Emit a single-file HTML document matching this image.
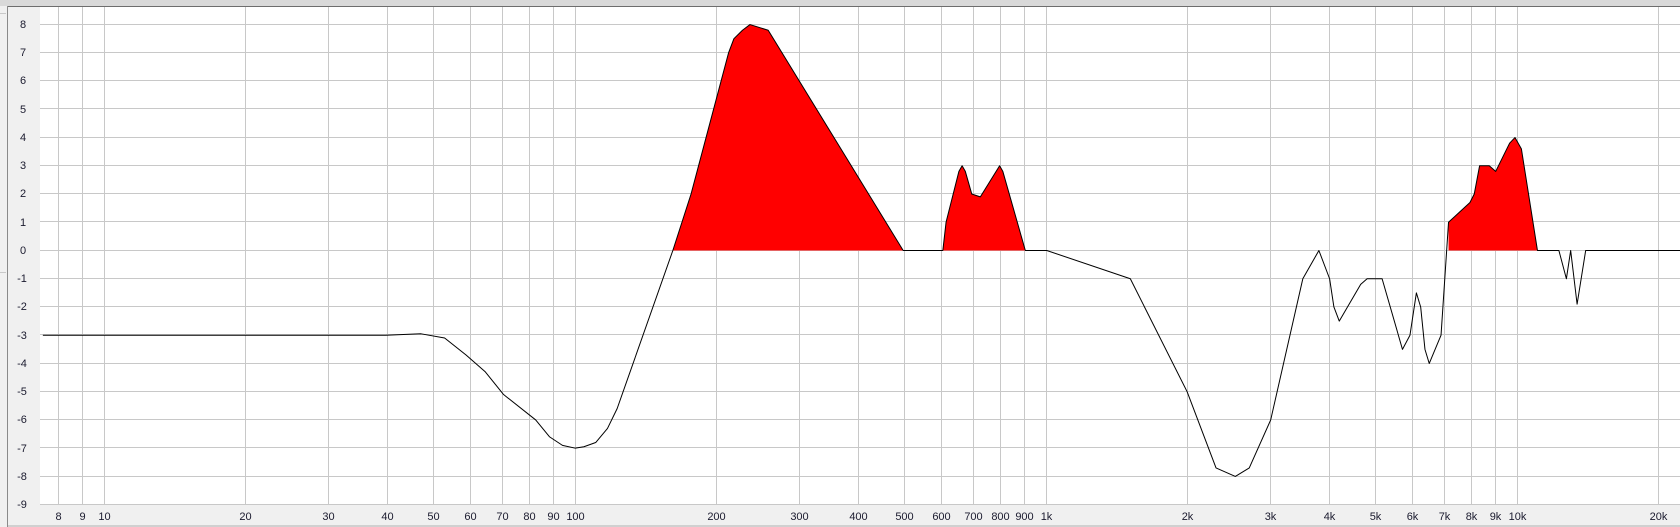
<!DOCTYPE html>
<html><head><meta charset="utf-8"><style>
html,body{margin:0;padding:0;background:#f0f0f0;}
svg{display:block;font-family:"Liberation Sans",sans-serif;}
</style></head><body>
<svg width="1680" height="527" viewBox="0 0 1680 527" xmlns="http://www.w3.org/2000/svg">
<rect x="0" y="0" width="1680" height="527" fill="#f0f0f0"/>
<rect x="0" y="0" width="1680" height="6" fill="#d9d9d9"/>
<rect x="7" y="6" width="1673" height="1" fill="#6d6d6d"/>
<rect x="7" y="6" width="1" height="521" fill="#8a8a8a"/>
<rect x="0" y="13" width="6" height="1" fill="#c8c8c8"/>
<rect x="0" y="272" width="6" height="1" fill="#c8c8c8"/>
<rect x="8" y="7" width="1672" height="518" fill="#f0f0f0"/>
<rect x="40" y="7" width="1640" height="497" fill="#ffffff"/>
<g stroke="#c8c8c8" stroke-width="1" shape-rendering="crispEdges">
<line x1="40" x2="1680" y1="24.5" y2="24.5"/><line x1="40" x2="1680" y1="52.5" y2="52.5"/><line x1="40" x2="1680" y1="80.5" y2="80.5"/><line x1="40" x2="1680" y1="108.5" y2="108.5"/><line x1="40" x2="1680" y1="137.5" y2="137.5"/><line x1="40" x2="1680" y1="165.5" y2="165.5"/><line x1="40" x2="1680" y1="193.5" y2="193.5"/><line x1="40" x2="1680" y1="221.5" y2="221.5"/><line x1="40" x2="1680" y1="250.5" y2="250.5"/><line x1="40" x2="1680" y1="278.5" y2="278.5"/><line x1="40" x2="1680" y1="306.5" y2="306.5"/><line x1="40" x2="1680" y1="334.5" y2="334.5"/><line x1="40" x2="1680" y1="363.5" y2="363.5"/><line x1="40" x2="1680" y1="391.5" y2="391.5"/><line x1="40" x2="1680" y1="419.5" y2="419.5"/><line x1="40" x2="1680" y1="447.5" y2="447.5"/><line x1="40" x2="1680" y1="476.5" y2="476.5"/><line x1="40" x2="1680" y1="504.5" y2="504.5"/>
<line y1="7" y2="504" x1="58.5" x2="58.5"/><line y1="7" y2="504" x1="82.5" x2="82.5"/><line y1="7" y2="504" x1="104.5" x2="104.5"/><line y1="7" y2="504" x1="245.5" x2="245.5"/><line y1="7" y2="504" x1="328.5" x2="328.5"/><line y1="7" y2="504" x1="387.5" x2="387.5"/><line y1="7" y2="504" x1="433.5" x2="433.5"/><line y1="7" y2="504" x1="470.5" x2="470.5"/><line y1="7" y2="504" x1="502.5" x2="502.5"/><line y1="7" y2="504" x1="529.5" x2="529.5"/><line y1="7" y2="504" x1="553.5" x2="553.5"/><line y1="7" y2="504" x1="575.5" x2="575.5"/><line y1="7" y2="504" x1="716.5" x2="716.5"/><line y1="7" y2="504" x1="799.5" x2="799.5"/><line y1="7" y2="504" x1="858.5" x2="858.5"/><line y1="7" y2="504" x1="904.5" x2="904.5"/><line y1="7" y2="504" x1="941.5" x2="941.5"/><line y1="7" y2="504" x1="973.5" x2="973.5"/><line y1="7" y2="504" x1="1000.5" x2="1000.5"/><line y1="7" y2="504" x1="1024.5" x2="1024.5"/><line y1="7" y2="504" x1="1046.5" x2="1046.5"/><line y1="7" y2="504" x1="1187.5" x2="1187.5"/><line y1="7" y2="504" x1="1270.5" x2="1270.5"/><line y1="7" y2="504" x1="1329.5" x2="1329.5"/><line y1="7" y2="504" x1="1375.5" x2="1375.5"/><line y1="7" y2="504" x1="1412.5" x2="1412.5"/><line y1="7" y2="504" x1="1444.5" x2="1444.5"/><line y1="7" y2="504" x1="1471.5" x2="1471.5"/><line y1="7" y2="504" x1="1495.5" x2="1495.5"/><line y1="7" y2="504" x1="1517.5" x2="1517.5"/><line y1="7" y2="504" x1="1658.5" x2="1658.5"/>
</g>
<rect x="8" y="525" width="1672" height="2" fill="#d0d0d0"/>
<g transform="translate(0,250.5) scale(1.0714,-28.24)">
<polygon fill="#ff0000" points="628,0 645,2 680,7 685,7.5 693,7.8 700,8 717,7.8 843,0"/>
<polygon fill="#ff0000" points="880,0 883,1 895,2.8 898,3 901,2.8 907,2 915,1.9 933,3 936,2.8 957,0"/>
<polygon fill="#ff0000" points="1352,0 1352,1 1372,1.7 1376,2 1381,3 1390,3 1396,2.8 1409,3.8 1414,4 1420,3.6 1435,0"/>
<polyline fill="none" stroke="#000" stroke-width="1" vector-effect="non-scaling-stroke" stroke-linejoin="round" points="40,-3 360,-3 393,-2.95 415,-3.1 435,-3.7 453,-4.3 470,-5.1 500,-6 513,-6.6 525,-6.9 537,-7 545,-6.95 556,-6.8 567,-6.3 576,-5.6 628,0 645,2 680,7 685,7.5 693,7.8 700,8 717,7.8 843,0 880,0 883,1 895,2.8 898,3 901,2.8 907,2 915,1.9 933,3 936,2.8 957,0 977,0 1055,-1 1108,-5 1135,-7.7 1153,-8 1166,-7.7 1186,-6 1216,-1 1231,0 1241,-1 1245,-2 1250,-2.5 1270,-1.2 1276,-1 1290,-1 1309,-3.5 1316,-3 1322,-1.5 1326,-2 1330,-3.5 1334,-4 1345,-3 1352,1 1372,1.7 1376,2 1381,3 1390,3 1396,2.8 1409,3.8 1414,4 1420,3.6 1435,0 1455,0 1462,-1 1466,0 1472,-1.9 1480,0 1570,0"/>
</g>
<g font-size="11" fill="#1a1a2e" text-anchor="middle">
<text x="23" y="28">8</text><text x="23" y="56">7</text><text x="23" y="84">6</text><text x="23" y="113">5</text><text x="23" y="141">4</text><text x="23" y="169">3</text><text x="23" y="197">2</text><text x="23" y="226">1</text><text x="23" y="254">0</text><text x="22" y="282">-1</text><text x="22" y="310">-2</text><text x="22" y="339">-3</text><text x="22" y="367">-4</text><text x="22" y="395">-5</text><text x="22" y="423">-6</text><text x="22" y="452">-7</text><text x="22" y="480">-8</text><text x="22" y="508">-9</text>
<text x="58.5" y="520">8</text><text x="82.5" y="520">9</text><text x="104.5" y="520">10</text><text x="245.5" y="520">20</text><text x="328.5" y="520">30</text><text x="387.5" y="520">40</text><text x="433.5" y="520">50</text><text x="470.5" y="520">60</text><text x="502.5" y="520">70</text><text x="529.5" y="520">80</text><text x="553.5" y="520">90</text><text x="575.5" y="520">100</text><text x="716.5" y="520">200</text><text x="799.5" y="520">300</text><text x="858.5" y="520">400</text><text x="904.5" y="520">500</text><text x="941.5" y="520">600</text><text x="973.5" y="520">700</text><text x="1000.5" y="520">800</text><text x="1024.5" y="520">900</text><text x="1046.5" y="520">1k</text><text x="1187.5" y="520">2k</text><text x="1270.5" y="520">3k</text><text x="1329.5" y="520">4k</text><text x="1375.5" y="520">5k</text><text x="1412.5" y="520">6k</text><text x="1444.5" y="520">7k</text><text x="1471.5" y="520">8k</text><text x="1495.5" y="520">9k</text><text x="1517.5" y="520">10k</text><text x="1658.5" y="520">20k</text>
</g>
</svg>
</body></html>
